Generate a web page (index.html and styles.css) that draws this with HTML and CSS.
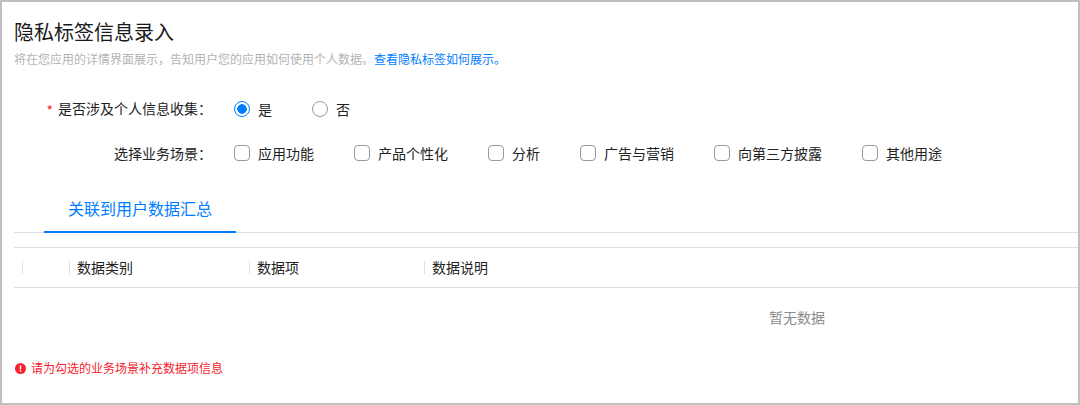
FILE: index.html
```html
<!DOCTYPE html>
<html lang="zh-CN">
<head>
    <meta charset="UTF-8">
    <meta name="viewport" content="width=device-width, initial-scale=1.0">
    <title>隐私标签信息录入</title>
    <link rel="stylesheet" href="styles.css">
</head>
<body>
    <div class="frame">
        <h1>隐私标签信息录入</h1>
        <p class="subtitle">将在您应用的详情界面展示，告知用户您的应用如何使用个人数据。<a href="#">查看隐私标签如何展示。</a></p>

        <div class="form-row first">
            <div class="form-label"><span class="required">*</span>是否涉及个人信息收集：</div>
            <div class="options">
                <label class="option option-yes"><span class="radio checked"></span>是</label>
                <label class="option"><span class="radio"></span>否</label>
            </div>
        </div>
        <div class="form-row second">
            <div class="form-label">选择业务场景：</div>
            <div class="options">
                <label class="option scene-a"><span class="checkbox"></span>应用功能</label>
                <label class="option scene-b"><span class="checkbox"></span>产品个性化</label>
                <label class="option scene-c"><span class="checkbox"></span>分析</label>
                <label class="option scene-d"><span class="checkbox"></span>广告与营销</label>
                <label class="option scene-e"><span class="checkbox"></span>向第三方披露</label>
                <label class="option"><span class="checkbox"></span>其他用途</label>
            </div>
        </div>

        <div class="tabs">
            <div class="tab">关联到用户数据汇总</div>
        </div>

        <div class="table">
            <div class="table-head">
                <div class="cell cell-check"></div>
                <div class="cell cell-type">数据类别</div>
                <div class="cell cell-item">数据项</div>
                <div class="cell cell-desc">数据说明</div>
            </div>
            <div class="table-empty">暂无数据</div>
        </div>

        <div class="error">
            <svg class="error-icon" viewBox="0 0 11 11" width="11" height="11">
                <circle cx="5.5" cy="5.5" r="5.5" fill="#f5222d"/>
                <rect x="4.8" y="2.2" width="1.4" height="4.2" fill="#fff"/>
                <rect x="4.8" y="7.2" width="1.4" height="1.5" fill="#fff"/>
            </svg>
            请为勾选的业务场景补充数据项信息
        </div>
    </div>
</body>
</html>
```

FILE: styles.css
```css
html, body {
    margin: 0;
    padding: 0;
}
body {
    font-family: "Noto Sans CJK SC", "Liberation Sans", sans-serif;
    background-color: #fff;
    color: #222;
}
.frame {
    box-sizing: border-box;
    width: 1080px;
    height: 405px;
    border: 2px solid #bfbfbf;
    padding: 16px 0 0 12px;
    overflow: hidden;
}
h1 {
    margin: 0;
    font-size: 20px;
    font-weight: 400;
    line-height: 28px;
    color: #191919;
}
.subtitle {
    margin: 3px 0 0;
    font-size: 12px;
    line-height: 20px;
    color: #b3b3b3;
}
.subtitle a {
    color: #007dff;
    text-decoration: none;
}
.form-row {
    display: flex;
    align-items: center;
    height: 20px;
    font-size: 14px;
}
.form-row.first {
    margin-top: 30px;
}
.form-row.second {
    margin-top: 24px;
}
.form-label {
    width: 198px;
    margin-right: 22px;
    flex-shrink: 0;
    text-align: right;
    white-space: nowrap;
}
.required {
    color: #f5222d;
    margin-right: 5px;
    font-size: 14px;
    vertical-align: -2px;
}
.options {
    display: flex;
}
.option {
    display: flex;
    align-items: center;
    gap: 8px;
    line-height: 20px;
}
.option-yes {
    width: 78px;
}
.scene-a {
    width: 120px;
}
.scene-b {
    width: 134px;
}
.scene-c {
    width: 92px;
}
.scene-d {
    width: 134px;
}
.scene-e {
    width: 148px;
}
.radio, .checkbox {
    box-sizing: border-box;
    display: block;
    width: 16px;
    height: 16px;
    border: 1px solid #9a9a9a;
    background-color: #fff;
}
.radio {
    border-radius: 50%;
}
.checkbox {
    border-radius: 4px;
}
.radio.checked {
    border-color: #007dff;
    background: radial-gradient(circle, #007dff 0 4.5px, #fff 5px);
}
.tabs {
    margin-top: 25px;
    height: 45px;
    box-sizing: border-box;
    border-bottom: 1px solid #e0e0e0;
    padding-left: 30px;
}
.tab {
    box-sizing: border-box;
    width: 192px;
    height: 45px;
    border-bottom: 2px solid #007dff;
    text-align: center;
    font-size: 16px;
    line-height: 40px;
    color: #007dff;
}
.table {
    margin-top: 14px;
    border-top: 1px solid #e0e0e0;
}
.table-head {
    display: flex;
    align-items: center;
    height: 39px;
    border-bottom: 1px solid #dcdcdc;
    font-size: 14px;
}
.cell {
    box-sizing: border-box;
    height: 13px;
    line-height: 13px;
    padding-left: 7px;
    border-left: 1px solid #e0e0e0;
    white-space: nowrap;
}
.cell-check {
    margin-left: 8px;
    width: 47px;
}
.cell-type {
    width: 180px;
}
.cell-item {
    width: 175px;
}
.cell-desc {
    width: 200px;
}
.table-empty {
    padding-left: 755px;
    font-size: 14px;
    line-height: 20px;
    margin-top: 19px;
    color: #8c8c8c;
}
.error {
    display: flex;
    align-items: center;
    gap: 5px;
    margin-top: 31px;
    font-size: 12px;
    line-height: 20px;
    color: #f5222d;
    padding-left: 1px;
}
```
